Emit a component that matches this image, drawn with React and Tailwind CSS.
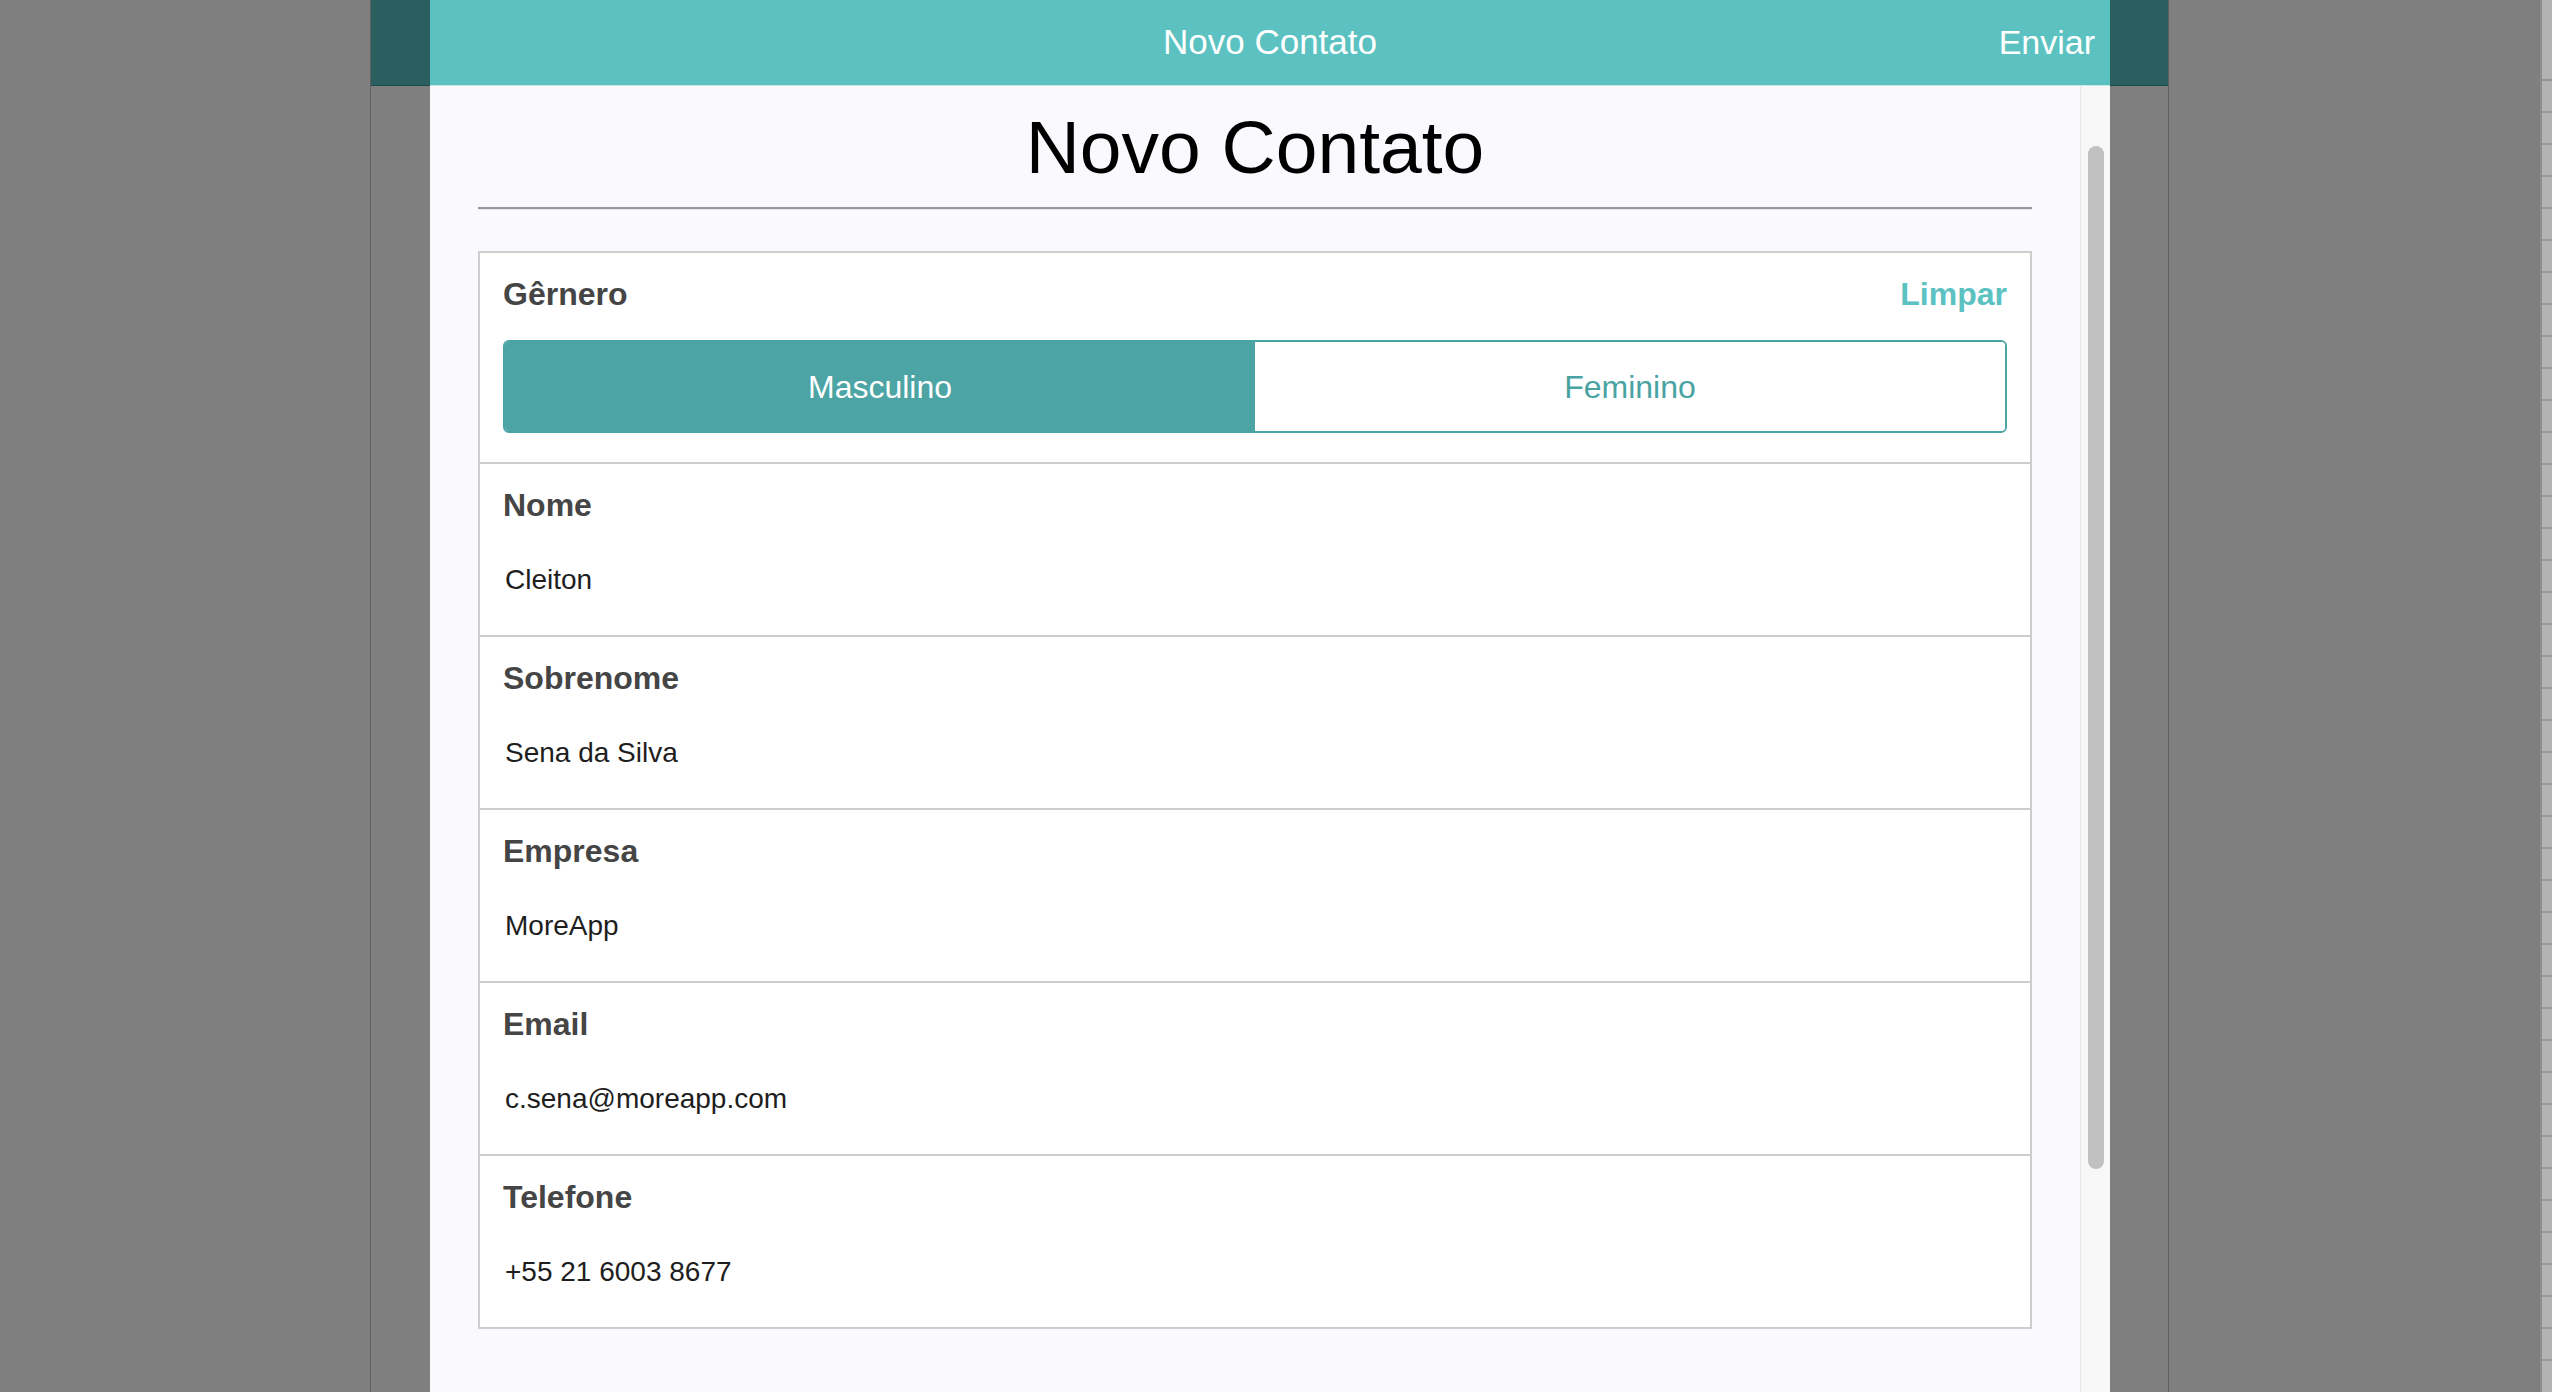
import React from 'react';

const fields = [
  { id: 'nome', label: 'Nome', value: 'Cleiton' },
  { id: 'sobrenome', label: 'Sobrenome', value: 'Sena da Silva' },
  { id: 'empresa', label: 'Empresa', value: 'MoreApp' },
  { id: 'email', label: 'Email', value: 'c.sena@moreapp.com' },
  { id: 'telefone', label: 'Telefone', value: '+55 21 6003 8677' },
];

const font = "font-['Liberation_Sans','Helvetica_Neue',Arial,sans-serif]";

const GenderRow = () => (
  <div className="px-[23px] pt-[22px] pb-[29px] border-b-2 border-[#cdcdcd]">
    <div className="flex items-center justify-between h-[38px]">
      <span className="text-[32px] leading-[38px] font-bold text-[#454545]">Gêrnero</span>
      <span className="text-[32px] leading-[38px] font-bold text-[#5bc2c1]">Limpar</span>
    </div>
    <div className="mt-[27px] h-[93px] flex rounded-[6px] border-2 border-[#4aa3a3] overflow-hidden">
      <div className="flex-1 bg-[#4ca4a4] flex items-center justify-center text-[32px] text-white">Masculino</div>
      <div className="flex-1 bg-white flex items-center justify-center text-[32px] text-[#4aa3a3]">Feminino</div>
    </div>
  </div>
);

const FieldRow = ({ label, value, last }) => (
  <div className={`px-[23px] pt-[22px] pb-[39px] ${last ? '' : 'border-b-2 border-[#cdcdcd]'}`}>
    <div className="text-[32px] leading-[38px] font-bold text-[#454545]">{label}</div>
    <div className="mt-[40px] pl-[2px] text-[28px] leading-[32px] text-[#1e1e1e]">{value}</div>
  </div>
);

export default function App() {
  return (
    <div className={`w-full h-[1392px] flex bg-[#7f7f7f] overflow-hidden ${font}`}>
      {/* page behind, left */}
      <div className="w-[370px] shrink-0" />

      {/* device frame */}
      <div className="w-[1799px] shrink-0 flex border-x border-[#5f5f5f]">
        {/* dimmed strip left */}
        <div className="w-[59px] shrink-0 flex flex-col">
          <div className="h-[86px] bg-[#2a5e5f] border-b border-[#1f4a4a]" />
        </div>

        {/* modal */}
        <div className="w-[1680px] shrink-0 flex flex-col">
          <div className="h-[86px] shrink-0 grid grid-cols-[1fr_auto_1fr] items-center bg-[#5bc2c1] border-b border-[#c6e9e8]">
            <div />
            <div className="text-[35px] text-white">Novo Contato</div>
            <div className="flex justify-end pr-[15px] text-[34px] text-white">Enviar</div>
          </div>

          <div className="flex-1 flex">
            <div className="w-[1650px] shrink-0 bg-[#f9f9fe] px-[48px] pt-[18px]">
              <h1 className="text-[75px] leading-[86px] text-black text-center">Novo Contato</h1>
              <div className="mt-[17px] h-[2px] bg-[#999999]" />
              <div className="h-[1px] bg-[#e6e6ea]" />

              <div className="mt-[41px] bg-white border-2 border-[#cdcdcd]">
                <GenderRow />
                {fields.map((f, i) => (
                  <FieldRow key={f.id} label={f.label} value={f.value} last={i === fields.length - 1} />
                ))}
              </div>
            </div>

            {/* scrollbar */}
            <div className="w-[30px] shrink-0 bg-[#f8f8f8] border-l border-[#e6e6e6] pl-[7px] pt-[60px]">
              <div className="w-[16px] h-[1023px] rounded-full bg-[#c1c1c1]" />
            </div>
          </div>
        </div>

        {/* dimmed strip right */}
        <div className="w-[58px] shrink-0 flex flex-col">
          <div className="h-[86px] bg-[#2a5e5f] border-b border-[#1f4a4a]" />
        </div>
      </div>

      {/* page behind, right */}
      <div className="flex-1" />

      {/* neighbouring window edge */}
      <div className="w-[12px] shrink-0 flex flex-col overflow-hidden bg-[#b3b3b3] border-l-2 border-[#8e8e8e]">
        <div className="h-[81px] shrink-0 border-b-2 border-[#939393]" />
        {Array.from({ length: 40 }).map((_, i) => (
          <div key={i} className="h-[32px] shrink-0 border-b-2 border-[#999999]" />
        ))}
      </div>
    </div>
  );
}
